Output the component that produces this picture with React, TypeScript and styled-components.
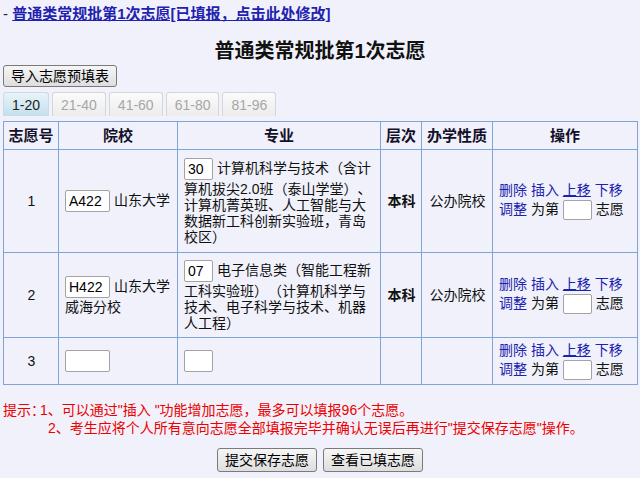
import React from 'react';
import styled, { createGlobalStyle, css } from 'styled-components';

const GlobalStyle = createGlobalStyle`
  body {
    margin: 0;
    padding: 0 3px;
    background: #f0f1fa;
    color: #000;
    font-family: "Liberation Sans", "Noto Sans CJK SC", sans-serif;
    font-size: 14px;
    text-spacing-trim: space-all;
  }
`;

const tabs = ['1-20', '21-40', '41-60', '61-80', '81-96'];

type Row = {
  no: number;
  code: string;
  school: string;
  major: string;
  majorText: string;
  level: string;
  kind: string;
  height?: number;
};

const rows: Row[] = [
  {
    no: 1,
    code: 'A422',
    school: '山东大学',
    major: '30',
    majorText:
      '计算机科学与技术（含计算机拔尖2.0班（泰山学堂）、计算机菁英班、人工智能与大数据新工科创新实验班，青岛校区）',
    level: '本科',
    kind: '公办院校',
    height: 103,
  },
  {
    no: 2,
    code: 'H422',
    school: '山东大学威海分校',
    major: '07',
    majorText:
      '电子信息类（智能工程新工科实验班）（计算机科学与技术、电子科学与技术、机器人工程）',
    level: '本科',
    kind: '公办院校',
    height: 85,
  },
  { no: 3, code: '', school: '', major: '', majorText: '', level: '', kind: '' },
];

export default function App() {
  return (
    <Page>
      <GlobalStyle />
      <TopLine>
        - <TopLink href="#">普通类常规批第1次志愿[已填报，点击此处修改]</TopLink>
      </TopLine>
      <Title>普通类常规批第1次志愿</Title>
      <Button>导入志愿预填表</Button>
      <Tabs>
        {tabs.map((t, i) => (
          <Tab key={t} $active={i === 0}>
            {t}
          </Tab>
        ))}
      </Tabs>
      <Table>
        <colgroup>
          <Col $w={55} />
          <Col $w={119} />
          <Col $w={203} />
          <Col $w={41} />
          <Col $w={71} />
          <Col $w={145} />
        </colgroup>
        <thead>
          <tr>
            <Th>志愿号</Th>
            <Th>院校</Th>
            <Th>专业</Th>
            <Th>层次</Th>
            <Th>办学性质</Th>
            <Th>操作</Th>
          </tr>
        </thead>
        <tbody>
          {rows.map((r) => (
            <tr key={r.no}>
              <Td $center $h={r.height}>{r.no}</Td>
              <Td>
                <CodeInput defaultValue={r.code} /> {r.school}
              </Td>
              <Td>
                <MajorInput defaultValue={r.major} /> {r.majorText}
              </Td>
              <Td $center $bold>{r.level}</Td>
              <Td $center>{r.kind}</Td>
              <Td>
                <OpLine>
                  <OpLink href="#">删除</OpLink> <OpLink href="#">插入</OpLink>{' '}
                  <OpLink href="#" $underline>上移</OpLink> <OpLink href="#">下移</OpLink>
                </OpLine>
                <OpLine>
                  <OpLink href="#">调整</OpLink> 为第 <OrderInput /> 志愿
                </OpLine>
              </Td>
            </tr>
          ))}
        </tbody>
      </Table>
      <Hints>
        <HintLine>
          <HintLabel>提示：</HintLabel>1、可以通过"插入 "功能增加志愿，最多可以填报96个志愿。
        </HintLine>
        <HintLine $indent>
          2、考生应将个人所有意向志愿全部填报完毕并确认无误后再进行"提交保存志愿"操作。
        </HintLine>
      </Hints>
      <Actions>
        <Button>提交保存志愿</Button>
        <Button>查看已填志愿</Button>
      </Actions>
    </Page>
  );
}

const Page = styled.div`
  display: flex;
  flex-direction: column;
  align-items: flex-start;
  padding-top: 4px;
`;

const TopLine = styled.div`
  height: 20px;
  line-height: 20px;
  font-size: 15px;
  color: #222;
`;

const TopLink = styled.a`
  color: #1f22b0;
  font-weight: bold;
  text-decoration: underline;
`;

const Title = styled.h1`
  align-self: stretch;
  margin: 14px 0 0;
  height: 26px;
  line-height: 26px;
  font-size: 20px;
  font-weight: bold;
  text-align: center;
  color: #111;
`;

const Button = styled.button`
  margin: 1px 0 0;
  height: 22px;
  padding: 0 7px;
  border: 1px solid #7a7a7a;
  border-radius: 3px;
  background: linear-gradient(#f6f6f6, #dedede);
  color: #000;
  font-family: inherit;
  font-size: 14px;
  line-height: 20px;
`;

const Tabs = styled.div`
  display: flex;
  gap: 3px;
  margin-top: 5px;
`;

const Tab = styled.div<{ $active?: boolean }>`
  height: 24px;
  box-sizing: border-box;
  padding: 0 8px;
  line-height: 25px;
  font-size: 14px;
  border: 1px solid #d6d6d6;
  border-bottom: none;
  border-radius: 3px 3px 0 0;
  color: #a6a6a6;
  background: linear-gradient(#fbfbfb, #ececec);
  ${(p) =>
    p.$active &&
    css`
      color: #222;
      border-color: #c9dbe4;
      background: linear-gradient(#e9f4f9, #c3dfeb);
    `}
`;

const Table = styled.table`
  margin-top: 5px;
  width: 634px;
  table-layout: fixed;
  border-collapse: collapse;
  border: 1px solid #7fa5d6;
`;

const Col = styled.col<{ $w: number }>`
  width: ${(p) => p.$w}px;
`;

const Th = styled.th`
  height: 27px;
  padding: 0;
  border: 1px solid #7fa5d6;
  font-size: 15px;
  font-weight: bold;
  color: #15102a;
  text-align: center;
  line-height: 20px;
`;

const Td = styled.td<{ $center?: boolean; $bold?: boolean; $h?: number }>`
  height: ${(p) => (p.$h ? `${p.$h - 7}px` : 'auto')};
  padding: 3px 5px 3px 6px;
  border: 1px solid #7fa5d6;
  line-height: 16px;
  vertical-align: middle;
  color: #111;
  text-align: ${(p) => (p.$center ? 'center' : 'left')};
  font-weight: ${(p) => (p.$bold ? 'bold' : 'normal')};
  word-break: break-all;
`;

const BoxInput = styled.input`
  box-sizing: border-box;
  height: 22px;
  margin: 1px 0;
  padding: 0 3px;
  border: 1px solid #a3a3a3;
  border-radius: 2px;
  background: #fff;
  font-family: "Liberation Sans", sans-serif;
  font-size: 14px;
  color: #000;
  vertical-align: middle;
`;

const CodeInput = styled(BoxInput)`
  width: 45px;
`;

const MajorInput = styled(BoxInput)`
  width: 29px;
`;

const OrderInput = styled(BoxInput)`
  width: 29px;
  height: 20px;
`;

const OpLine = styled.div`
  line-height: 18px;
  white-space: nowrap;
`;

const OpLink = styled.a<{ $underline?: boolean }>`
  color: #1c22b0;
  text-decoration: ${(p) => (p.$underline ? 'underline' : 'none')};
`;

const Hints = styled.div`
  margin-top: 16px;
  color: #ee0000;
  line-height: 18px;
`;

const HintLine = styled.div<{ $indent?: boolean }>`
  padding-left: ${(p) => (p.$indent ? '45px' : '0')};
  white-space: nowrap;
`;

const HintLabel = styled.span`
  display: inline-block;
  width: 37px;
  font-feature-settings: "halt";
`;

const Actions = styled.div`
  align-self: stretch;
  display: flex;
  justify-content: center;
  gap: 6px;
  margin-top: 11px;
  ${Button} {
    height: 24px;
    margin: 0;
  }
`;
